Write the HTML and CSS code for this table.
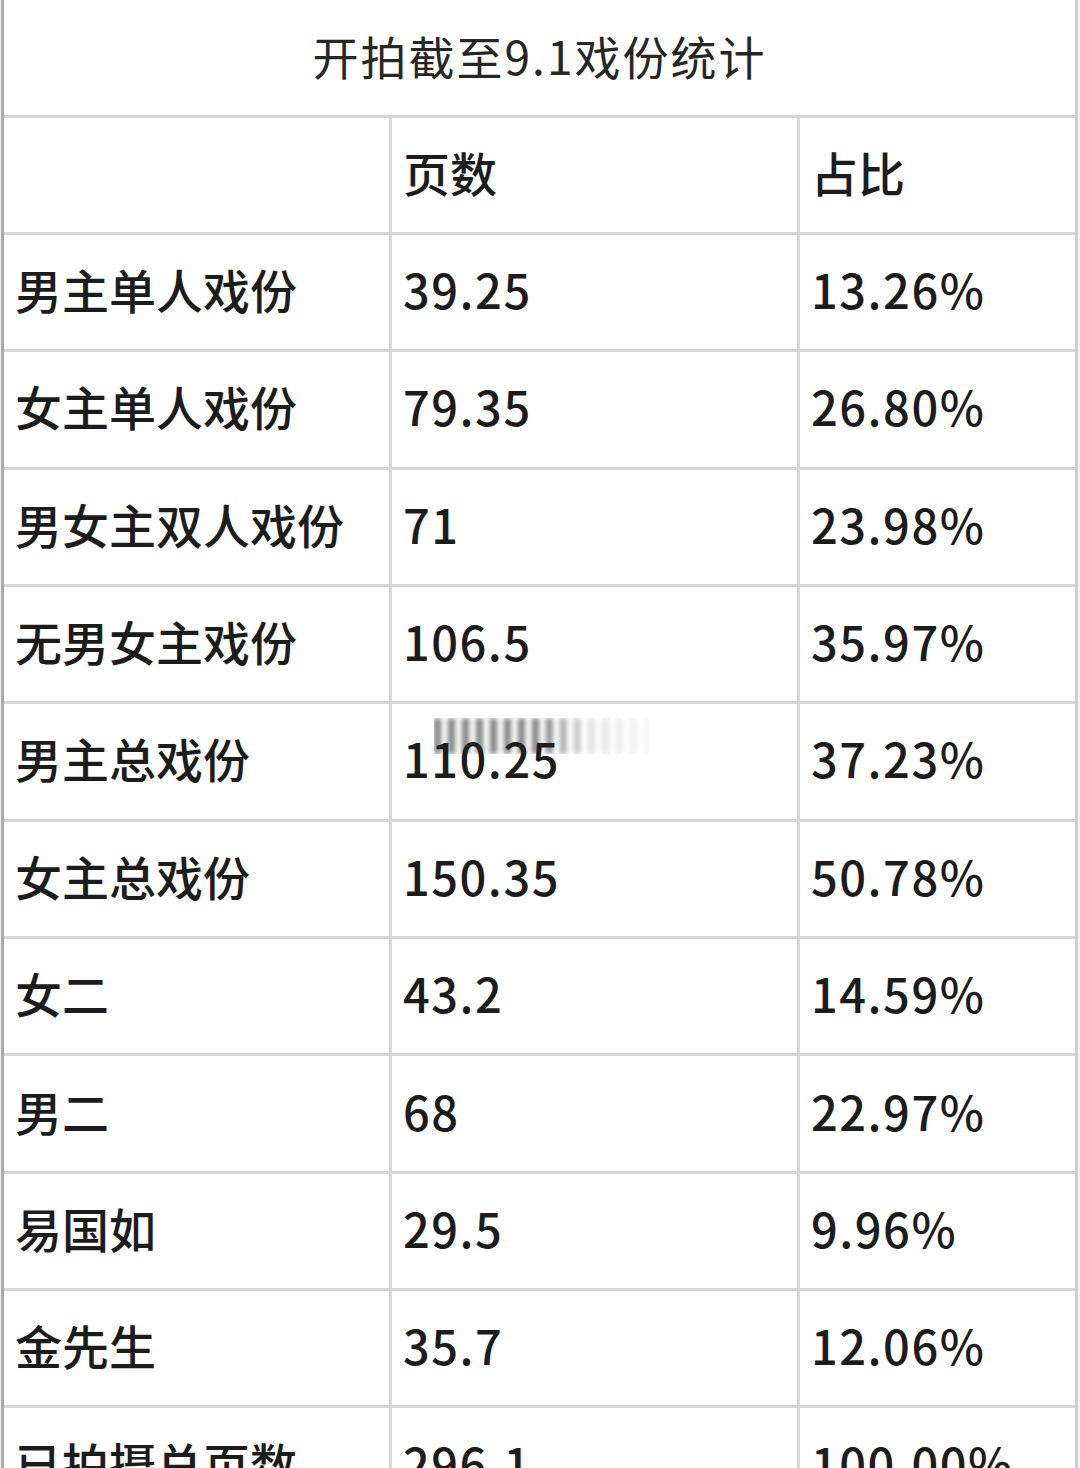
FILE: index.html
```html
<!DOCTYPE html>
<html lang="zh-CN">
<head>
<meta charset="utf-8">
<title>开拍截至9.1戏份统计</title>
<link rel="stylesheet" href="styles.css">
</head>
<body>
<div class="sheet">
  <div class="grid">
    <div class="cell title">开拍截至9.1戏份统计</div>
    <div class="cell"></div><div class="cell">页数</div><div class="cell">占比</div>
    <div class="cell">男主单人戏份</div><div class="cell num">39.25</div><div class="cell num">13.26%</div>
    <div class="cell">女主单人戏份</div><div class="cell num">79.35</div><div class="cell num">26.80%</div>
    <div class="cell">男女主双人戏份</div><div class="cell num">71</div><div class="cell num">23.98%</div>
    <div class="cell">无男女主戏份</div><div class="cell num">106.5</div><div class="cell num">35.97%</div>
    <div class="cell">男主总戏份</div><div class="cell num wm-host">110.25<span class="wm"></span></div><div class="cell num">37.23%</div>
    <div class="cell">女主总戏份</div><div class="cell num">150.35</div><div class="cell num">50.78%</div>
    <div class="cell">女二</div><div class="cell num">43.2</div><div class="cell num">14.59%</div>
    <div class="cell">男二</div><div class="cell num">68</div><div class="cell num">22.97%</div>
    <div class="cell">易国如</div><div class="cell num">29.5</div><div class="cell num">9.96%</div>
    <div class="cell">金先生</div><div class="cell num">35.7</div><div class="cell num">12.06%</div>
    <div class="cell">已拍摄总页数</div><div class="cell num">296.1</div><div class="cell num">100.00%</div>
  </div>
</div>
</body>
</html>
```
FILE: styles.css
```css
html, body {
  margin: 0;
  padding: 0;
  background: #ffffff;
}
body {
  width: 1080px;
  height: 1468px;
  overflow: hidden;
}
.sheet {
  width: 1080px;
  height: 1468px;
  background: #f3f3f3;
  padding-left: 1px;
  box-sizing: border-box;
}
.grid {
  display: grid;
  grid-template-columns: 385px 405px 275px;
  grid-template-rows: 114.5px repeat(12, 114.36px);
  gap: 3px;
  background: #d6d6d6;
  border-left: 3px solid #a9a9a9;
  border-right: 3px solid #cfcfcf;
  width: 1077px;
  box-sizing: border-box;
}
.cell {
  background: #ffffff;
  display: flex;
  align-items: center;
  padding-left: 11px;
  padding-bottom: 7px;
  box-sizing: border-box;
  font-family: "Noto Sans CJK SC", "Noto Sans", sans-serif;
  font-weight: 500;
  font-size: 47px;
  color: #1c1c1c;
  white-space: nowrap;
}
.title {
  grid-column: 1 / span 3;
  justify-content: center;
  padding-left: 0;
  padding-bottom: 4px;
  font-size: 46px;
  font-weight: 400;
  letter-spacing: 2px;
  color: #262626;
}
.num {
  letter-spacing: 1.5px;
}
.wm-host {
  position: relative;
}
.wm {
  position: absolute;
  left: 42px;
  top: 14px;
  width: 215px;
  height: 36px;
  background:
    repeating-linear-gradient(90deg, rgba(40,40,40,0.7) 0 7px, rgba(255,255,255,0) 7px 14px);
  -webkit-mask-image: linear-gradient(90deg, #000 0 50%, rgba(0,0,0,0.25) 72%, rgba(0,0,0,0.08) 100%);
  mask-image: linear-gradient(90deg, #000 0 50%, rgba(0,0,0,0.25) 72%, rgba(0,0,0,0.08) 100%);
  filter: blur(2.5px);
  opacity: 0.85;
}
```
